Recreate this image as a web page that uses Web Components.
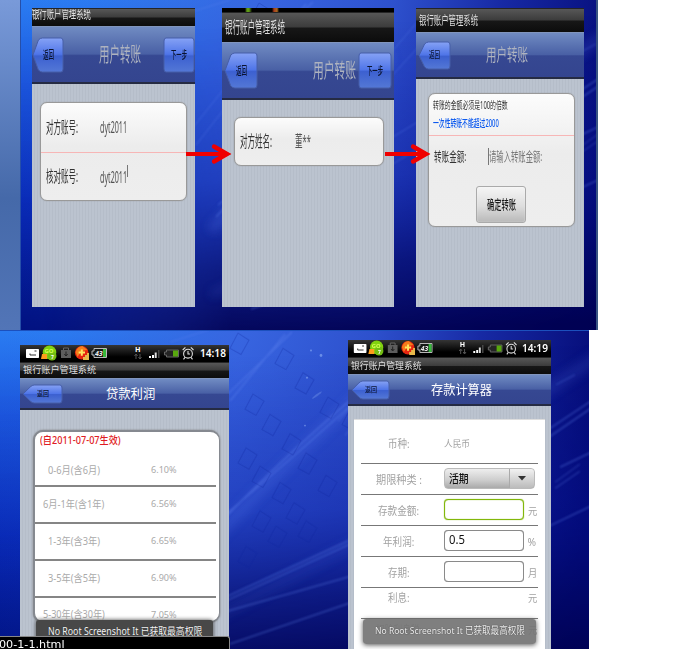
<!DOCTYPE html>
<html lang="zh">
<head>
<meta charset="utf-8">
<title>银行账户管理系统</title>
<style>
body{margin:0;background:#fff;font-family:"Noto Sans","Noto Sans CJK SC",sans-serif;width:698px;height:649px;overflow:hidden}
</style>
</head>
<body>
<slide-deck></slide-deck>
<script>
const define=(name,html,init)=>customElements.define(name,class extends HTMLElement{
  connectedCallback(){
    if(this.shadowRoot)return;
    const t=document.createElement('template');
    t.innerHTML=typeof html==='function'?html(this):html;
    this.attachShadow({mode:'open'}).append(t.content.cloneNode(true));
    if(init)init(this,this.shadowRoot);
  }
});

/* Text condensed or expanded horizontally to an exact width */
define('fit-text',`<style>:host{display:block;flex:none;white-space:nowrap;line-height:1.2}
span{display:inline-block;transform-origin:0 50%;vertical-align:top}</style><span><slot></slot></span>`,(el,root)=>{
  const w=+el.getAttribute('w'),s=root.querySelector('span');
  el.style.fontSize=el.getAttribute('size')+'px';
  el.style.width=w+'px';
  s.style.transform=`scaleX(${w/s.offsetWidth})`;
});

define('deck-backdrop',el=>{
  const top=el.getAttribute('kind')==='top';
  const diamonds=[[40,15],[85,30],[105,54],[55,75],[72,95],[130,78],[152,90],[92,114],[48,128],[62,146],[108,133],[128,155],[82,162],[96,182],[62,190],[78,205],[108,200],[48,225]]
   .map(([x,y])=>`<path d="M${x+198} ${y-12}l11 7-8 14-11-6z"/>`).join('');
  return `<style>:host{display:block;overflow:hidden}svg{display:block;width:100%;height:100%}</style>
<svg viewBox="0 0 ${top?575:589} ${top?330:319}" preserveAspectRatio="none">
<defs><linearGradient id="v" x1="0" y1="0" x2="0" y2="1"><stop offset="0" stop-color="#2a7cf2"/><stop offset=".25" stop-color="#1c57de"/><stop offset=".6" stop-color="#0a2fbe"/><stop offset="1" stop-color="#001690"/></linearGradient>
<linearGradient id="h" x1="0" y1="0" x2="1" y2=".05"><stop offset="0" stop-color="#3d63d8" stop-opacity="0"/><stop offset=".1" stop-color="#3d63d8" stop-opacity=".05"/><stop offset=".4" stop-color="#3b60dc" stop-opacity=".8"/><stop offset=".62" stop-color="#2e4bc8" stop-opacity=".88"/><stop offset=".8" stop-color="#1625a0" stop-opacity=".95"/><stop offset="1" stop-color="#050c78"/></linearGradient>
<linearGradient id="b" x1="0" y1="0" x2=".06" y2="1"><stop offset=".1" stop-color="#000c8a" stop-opacity="0"/><stop offset=".55" stop-color="#000c8a" stop-opacity=".3"/><stop offset=".8" stop-color="#000564" stop-opacity=".7"/><stop offset="1" stop-color="#000050" stop-opacity=".92"/></linearGradient>
<linearGradient id="lm" x1="0" x2="1"><stop offset=".03" stop-color="#fff" stop-opacity=".35"/><stop offset=".35" stop-color="#fff"/></linearGradient><mask id="m"><rect width="600" height="340" fill="url(#lm)"/></mask>
<filter id="f" x="-20%" y="-20%" width="140%" height="140%"><feGaussianBlur stdDeviation="5"/></filter>
<filter id="s"><feGaussianBlur stdDeviation=".8"/></filter></defs>
<rect width="600" height="340" fill="url(#v)"/><rect width="600" height="340" fill="url(#h)"/><rect width="600" height="340" fill="url(#b)" mask="url(#m)"/>
<g filter="url(#f)" fill="none" stroke="#5377eb"><path d="M190 230Q270 145 370 55" stroke-width="9" opacity=".3"/><path d="M190 295L365 205" stroke-width="8" opacity=".16"/><path d="M500 90L600 25" stroke-width="10" opacity=".2"/></g>
<g filter="url(#s)" fill="none" stroke="#6b8df5" opacity=".36"><path d="M195 217Q260 145 355 65M228 63L292 2M230 70L285 4M197 205Q265 150 350 75" stroke-width="1.5"/><path d="M210 270L365 200M212 273L365 204M205 283L360 240M230 309L355 267M545 100L594 68M545 108L594 75M545 195L594 172M560 135L594 119" stroke-width="1.5"/><path d="M170 12L209 0M170 130L214 75M175 145L218 90M338 90L398 20M345 104L402 42M350 150L400 120M350 177L400 147M556 54L575 44M555 150L580 132M555 156L580 139"/></g>
<g fill="none" stroke="#142aa0" opacity=".28">${diamonds}</g>
<g fill="#a8c8ff" opacity=".5"><circle cx="311" cy="20" r="1"/><circle cx="321" cy="25" r="1.4"/><circle cx="307" cy="47" r="1"/><circle cx="305" cy="94" r=".9"/><ellipse cx="317" cy="64" rx="6" ry="1" transform="rotate(-35 317 64)" opacity=".5"/></g>
${top?'':'<path d="M0 .5H589" stroke="#1c50bd"/>'}
</svg>`});

define('flow-arrow',`<style>:host{display:block;position:absolute;width:47px;height:22px}svg{display:block}</style>
<svg width="47" height="22" viewBox="0 0 47 22"><path d="M0 11H40" stroke="#f00000" stroke-width="4"/><path d="M28 3.5L41 11L28 18.5" fill="none" stroke="#f00000" stroke-width="4.4" stroke-linecap="round"/><path d="M36 6.5L45 11L36 15.5z" fill="#f00000"/></svg>`);

define('phone-screen',el=>`<style>:host{display:flex;flex-direction:column;flex:none;overflow:hidden;position:relative;width:${el.getAttribute('w')}px;height:${el.getAttribute('h')}px;
background:repeating-linear-gradient(90deg,#bbc3cf 0 2px,#b5bdc9 2px 3px)}</style><slot></slot>`);

define('status-icons',`<style>:host{display:block;flex:none;height:17px;background:linear-gradient(#353535,#000 70%)}svg{display:block;width:100%;height:17px;overflow:hidden}text{font-family:"Noto Sans",sans-serif}</style>
<svg viewBox="0 0 209 17" preserveAspectRatio="none">
<rect x="6" y="4" width="13" height="9" rx=".8" fill="#fff"/><path d="M10 8.5v1.5h6M14.5 6h2" stroke="#333" fill="none"/>
<circle cx="29.5" cy="7.4" r="6.8" fill="#81d20e"/><circle cx="32" cy="11" r="4.5" fill="#72bd13"/><path d="M22 9h5v5h-6z" fill="#ff9d1c"/><text x="24.5" y="7.8" font-size="6" font-weight="700" fill="#d4ff56">GO</text><text x="31" y="14.2" font-size="5" font-weight="700" fill="#fff">7</text>
<path d="M43.5 5V3h5v2" fill="none" stroke="#666"/><rect x="41" y="5" width="10" height="8" fill="#5d5d5d"/><path d="M46 6.5v4M44.3 9l1.7 2 1.7-2" stroke="#222" fill="none"/>
<circle cx="61.7" cy="7.7" r="6.8" fill="#e72410"/><path d="M55.5 7q2-6 7-6l5 4-6 1-4 6z" fill="#ffac20" opacity=".65"/><path d="M61.8 4.4v6.4M58.6 7.5h6.4" stroke="#ffe65f" stroke-width="2"/><path d="M63 15v-3h2v-2h2V8h2v7z" fill="#e8b84b"/>
<path d="M72 6h2V3.5h12.5v9H74V10h-2z" fill="#161916" stroke="#bababa"/><path d="M83 4h3v8h-3z" fill="#36b83a"/><text x="75" y="10.8" font-size="7" font-style="italic" font-weight="700" fill="#eee">43</text>
<text x="115" y="6.8" font-size="7.2" font-weight="700" fill="#fff">H</text><path d="M116 14V9m-1.5 2L116 9l1.5 2M120 9v5m-1.5-2l1.5 2 1.5-2" stroke="#555" fill="none"/>
<path d="M129 13v-2h2v2zM132 13v-3h2v3z" fill="#fff"/><path d="M134.7 13V7.5h2V13z" fill="#ddd"/><path d="M138 13V5h1.5v8z" fill="#484848"/>
<path d="M144.5 7h2V5h12v7h-12v-2h-2z" fill="#252525" stroke="#666"/><path d="M153 5.5h5v6h-5z" fill="#58a80e"/>
<g fill="none" stroke="#ddd" stroke-width="1.1"><circle cx="168" cy="8.7" r="4.4"/><path d="M168 6v3h2M162.7 5l2.7-2.6M170.8 2.4l2.7 2.6M165 12.4l-1.5 2M171 12.4l1.5 2"/></g>
</svg>`);
define('status-bar',el=>`<style>:host{display:grid;flex:none;height:17px}status-icons,.t{grid-area:1/1}.t{justify-self:end;align-self:center;margin-right:${el.getAttribute('end')}px;color:#fff;font-weight:600}</style><status-icons></status-icons><fit-text class="t" w="26" size="10.5"><slot></slot></fit-text>`);

define('title-bar',el=>`<style>:host{display:flex;flex:none;align-items:center;overflow:hidden;box-sizing:border-box;height:${el.getAttribute('h')}px;padding-left:3px;color:#dedede;border-top:1px solid #252525;background:linear-gradient(#575757,#3c3c3c 48%,#171717 52%,#0c0c0c)}</style><slot></slot>`);

define('nav-bar',el=>`<style>:host{display:grid;grid-template-columns:${el.getAttribute('cols')};flex:none;align-items:center;box-sizing:border-box;height:${el.getAttribute('h')}px;border-top:1px solid #8195bd;border-bottom:2px solid #252b43;background:linear-gradient(#708bc2,#4960a5 49%,#364892 52%,#34458f)}
::slotted(fit-text){grid-column:3}</style><slot></slot>`);

define('nav-button',el=>{
 const w=+el.getAttribute('w'),h=+el.getAttribute('h'),back=el.hasAttribute('back'),n=w*.2;
 const p=back?`M1 ${h/2}L${n} 3Q${n+2} 1 ${n+4} 1H${w-3}Q${w-1} 1 ${w-1} 4V${h-4}Q${w-1} ${h-1} ${w-3} ${h-1}H${n+4}Q${n+2} ${h-1} ${n} ${h-3}Z`:`M3 1H${w-3}Q${w-1} 1 ${w-1} 4V${h-4}Q${w-1} ${h-1} ${w-3} ${h-1}H3Q1 ${h-1} 1 ${h-4}V4Q1 1 3 1Z`;
 return `<style>:host{display:grid;place-items:center;width:${w}px;height:${h}px;grid-column:${back?2:4};color:#0a1330;font-weight:500}svg,slot{grid-area:1/1}slot{display:block;${back?`padding-left:${el.getAttribute('pad')||1}px`:''}}</style><svg width="${w}" height="${h}"><defs><linearGradient id="g" x2="0" y2="1"><stop stop-color="#86a2f5"/><stop offset=".48" stop-color="#4f75e8"/><stop offset=".53" stop-color="#3c60d0"/><stop offset="1" stop-color="#5478d6"/></linearGradient></defs><path d="${p}" fill="url(#g)" stroke="#465ea8"/></svg><slot></slot>`});

define('form-card',el=>`<style>:host{display:flex;flex-direction:column;flex:none;box-sizing:border-box;border:1.5px solid #999;border-radius:7px;background:linear-gradient(#fcfcfc,#ececec 45%,#eee);color:#333;box-shadow:0 0 1px #888}</style><slot></slot>`);
define('form-row',`<style>:host{display:flex;flex:none;align-items:center;box-sizing:border-box}:host([line]){border-bottom:1.5px solid #f7b6b6}</style><slot></slot>`);
define('text-caret',`<style>:host{display:block;width:1px;height:17px;background:#777;flex:none}</style>`);
define('push-button',`<style>:host{display:grid;place-items:center;box-sizing:border-box;width:50px;height:37px;border:1px solid #aaa;border-radius:3px;background:linear-gradient(#f5f5f5,#ddd 55%,#b9b9b9);color:#181818;font-weight:500;box-shadow:inset 0 0 1px #fff}</style><slot></slot>`);

define('rate-card',`<style>:host{display:flex;flex-direction:column;box-sizing:border-box;width:187px;height:193px;margin:20px 0 0 13px;border:2px solid #858990;border-right-width:1.5px;border-radius:10px;background:#fff;overflow:hidden;box-shadow:0 0 2px #777}</style><slot></slot>`);
define('rate-row',el=>`<style>:host{display:grid;grid-template-columns:77px 1fr;flex:none;box-sizing:border-box;align-items:center;height:37px;width:181px;border-bottom:2px solid #858585;color:#aaa}:host([last]){border:0;height:34px}.a{justify-self:center}.b{margin-left:39px}</style><fit-text class="a" w="${el.getAttribute('w')}" size="10.3"><slot></slot></fit-text><fit-text class="b" w="26" size="9.8">${el.getAttribute('rate')}</fit-text>`);

define('calc-row',el=>`<style>:host{display:grid;grid-template-columns:75px 8px 80px 3.5px 1fr;flex:none;align-items:center;box-sizing:border-box;height:${el.getAttribute('h')||31}px;margin:0 7px;border-bottom:1.5px solid #777;color:#a2a2a2}.l{justify-self:center;padding-top:${el.getAttribute('drop')||0}px}.u{grid-column:5;padding-top:${el.getAttribute('drop')||0}px}::slotted(*){grid-column:3}</style><fit-text class="l" w="${el.getAttribute('w')}" size="10.8">${el.getAttribute('label')}</fit-text><slot></slot>${el.hasAttribute('unit')?`<fit-text class="u" w="9" size="10.3">${el.getAttribute('unit')}</fit-text>`:''}`);
define('input-box',`<style>:host{display:flex;box-sizing:border-box;width:80px;height:20.5px;border:1px solid #8a8a8a;border-radius:4px;background:#fff;color:#111;padding-left:4px;align-items:center;box-shadow:0 0 .5px #777}:host([focus]){border-color:#82b70b;box-shadow:0 0 1px #82b70b,inset 0 0 1px #82b70b}</style><slot></slot>`);
define('select-box',`<style>:host{display:flex;align-items:stretch;box-sizing:border-box;width:91px;height:21px;border:1px solid #bbb;border-radius:4px;background:linear-gradient(#eee,#ccc 60%,#aaa);color:#111}.t{flex:1;padding:4px 0 0 4px;font-weight:500}.a{width:24px;border-left:1px solid #aaa;display:grid;place-items:center;background:linear-gradient(#f2f2f2,#bbb);border-radius:0 4px 4px 0}</style><div class="t"><slot></slot></div><div class="a"><svg width="8" height="5"><path d="M0 0h8L4 4.5z" fill="#333"/></svg></div>`);
define('toast-note',`<style>:host{display:flex;position:absolute;box-sizing:border-box;justify-content:center;color:#f4f4f4;border-radius:3px;text-shadow:0 0 1px #222}</style><slot></slot>`);
define('link-status',`<style>:host{position:absolute;left:0;top:636px;width:230px;height:13px;box-sizing:border-box;background:#000;border:1px solid #888;border-left:0;border-bottom:0;border-radius:0 3px 0 0;color:#fff;font-family:"DejaVu Sans",sans-serif;overflow:hidden}</style><slot></slot>`);

define('slide-deck',`<style>:host{display:block;position:relative;width:698px;height:649px;overflow:hidden}
.s1,.s2{display:grid;overflow:hidden}.s1{width:598px;height:330px;grid-template-columns:21px 575px 2px}
.strip{background:linear-gradient(#799ad9,#4569a9 60%,#5275b7);border-right:1px solid #264fa8;box-sizing:border-box}.edge{background:#395482}
.s2{width:589px;height:319px}.s1>.row{grid-area:1/1/2/4;z-index:1}.s1>.strip{grid-area:1/1}.s1>deck-backdrop{grid-area:1/2}.s1>.edge{grid-area:1/3}
.s2>*{grid-area:1/1}.row{display:flex;position:relative;align-items:flex-start}.s1 .row{padding:8px 0 0 32px}.s2 .row{padding:10px 0 0 20px;gap:119px}</style>
<div class="s1"><div class="strip"></div><deck-backdrop kind="top"></deck-backdrop><div class="edge"></div>
<div class="row">
<phone-screen w="163" h="299">
 <title-bar h="18" style="padding-left:0"><fit-text w="59" size="14" style="margin-top:-8px">银行账户管理系统</fit-text></title-bar>
 <nav-bar h="58" cols="0 67px 64px 32px"><nav-button back w="32" h="36" pad="1"><fit-text w="11" size="11">返回</fit-text></nav-button><fit-text w="42" size="20.5" style="color:#aeb3bf">用户转账</fit-text><nav-button w="32" h="36"><fit-text w="16" size="11">下一步</fit-text></nav-button></nav-bar>
 <form-card style="margin:18px 8px 0 8px;height:99px"><form-row line style="height:49.5px;padding-left:5px"><fit-text w="32" size="16">对方账号:</fit-text><fit-text w="27" size="17" style="margin-left:22px;color:#505050">dyt2011</fit-text></form-row><form-row style="height:49px;padding-left:5px"><fit-text w="32" size="16">核对账号:</fit-text><fit-text w="27" size="17" style="margin-left:22px;color:#505050">dyt2011</fit-text><text-caret style="height:12px;margin-top:-12px"></text-caret></form-row></form-card>
</phone-screen>
<phone-screen w="172" h="299" style="margin-left:27px">
 <div style="height:4px;flex:none;background:linear-gradient(90deg,#000 23px,#5f9b16 25px,#5f9b16 27px,#000 30px 50px,#a8381a 52px,#a86a20 55px,#000 57px)"></div>
 <title-bar h="30"><fit-text w="60" size="15.5" style="margin-top:-1px">银行账户管理系统</fit-text></title-bar>
 <nav-bar h="58" cols="2px 89px 45px 34px"><nav-button back w="34" h="37" pad="0"><fit-text w="11" size="11">返回</fit-text></nav-button><fit-text w="43" size="20.5" style="color:#aeb3bf">用户转账</fit-text><nav-button w="34" h="37"><fit-text w="16" size="11">下一步</fit-text></nav-button></nav-bar>
 <form-card style="margin:17px 10px 0 11.5px;height:49px"><form-row style="height:48px;padding-left:5px"><fit-text w="32" size="16">对方姓名:</fit-text><fit-text w="16" size="16" style="margin-left:23px;color:#505050">董**</fit-text></form-row></form-card>
</phone-screen>
<phone-screen w="168" h="299" style="margin-left:22px">
 <title-bar h="24"><fit-text w="59" size="12.5">银行账户管理系统</fit-text></title-bar>
 <nav-bar h="47" cols="2px 68px 45px 34px"><nav-button back w="33" h="29" pad="0"><fit-text w="11" size="9">返回</fit-text></nav-button><fit-text w="42" size="17" style="color:#aeb3bf">用户转账</fit-text></nav-bar>
 <form-card style="margin:14px 9px 0 12px;height:134px"><form-row style="height:22px;padding-left:4px"><fit-text w="75" size="10.5">转账的金额必须是100的倍数</fit-text></form-row><form-row line style="height:20px;padding:0 0 5px 4px;color:#0b59ef;font-weight:500"><fit-text w="66" size="10.5">一次性转账不能超过2000</fit-text></form-row><form-row style="height:41px;padding-left:5px"><fit-text w="32" size="13">转账金额:</fit-text><text-caret style="margin-left:22px"></text-caret><fit-text w="53" size="13" style="color:#777">请输入转账金额:</fit-text></form-row><form-row style="height:37px;margin-top:9px;padding-left:47px"><push-button><fit-text w="29" size="13">确定转账</fit-text></push-button></form-row></form-card>
</phone-screen>
<flow-arrow style="left:186px;top:143px"></flow-arrow><flow-arrow style="left:385px;top:143px"></flow-arrow>
</div></div>
<div class="s2"><deck-backdrop></deck-backdrop><div class="row">
<phone-screen w="209" h="309" style="margin-top:5px">
 <status-bar end="3">14:18</status-bar><title-bar h="16"><fit-text w="73" size="9.4" style="margin-top:-1px">银行账户管理系统</fit-text></title-bar>
 <nav-bar h="32" cols="2px 84px 60px"><nav-button back w="41" h="20" pad="0"><fit-text w="12" size="6.5">返回</fit-text></nav-button><fit-text w="49" size="12.8" style="color:#fff">贷款利润</fit-text></nav-bar>
 <rate-card><fit-text w="81" size="9.8" style="color:#df1b23;margin:3px 0 0 5px;font-weight:500;height:12px">(自2011-07-07生效)</fit-text><div style="height:3px;flex:none"></div><rate-row w="52" rate="6.10%" style="height:36.5px;padding-top:5px">0-6月(含6月)</rate-row><rate-row w="61" rate="6.56%">6月-1年(含1年)</rate-row><rate-row w="52" rate="6.65%">1-3年(含3年)</rate-row><rate-row w="52" rate="6.90%">3-5年(含5年)</rate-row><rate-row last w="62" rate="7.05%">5-30年(含30年)</rate-row></rate-card>
 <toast-note style="left:16px;top:275px;width:177px;height:30px;padding-top:5px;background:#484848;box-shadow:0 0 4px #444"><fit-text w="154" size="10">No Root Screenshot It 已获取最高权限</fit-text></toast-note>
</phone-screen>
<phone-screen w="203" h="309">
 <status-bar end="3">14:19</status-bar><title-bar h="17"><fit-text w="71" size="9.2" style="margin-top:-1px">银行账户管理系统</fit-text></title-bar>
 <nav-bar h="32" cols="3px 80px 61px"><nav-button back w="39" h="20" pad="0"><fit-text w="12" size="6.5">返回</fit-text></nav-button><fit-text w="61" size="12.8" style="color:#fff">存款计算器</fit-text></nav-bar>
 <div style="margin:13px 6px 0 6px;background:#fff;flex:1;border-top:1px solid #ddd;box-sizing:border-box;display:flex;flex-direction:column"><div style="height:5px;flex:none"></div>
 <calc-row h="39" w="22" label="币种:"><fit-text w="26" size="9">人民币</fit-text></calc-row>
 <calc-row h="30.5" w="46" label="期限种类 :" drop="3"><select-box><fit-text w="20" size="10.8">活期</fit-text></select-box></calc-row>
 <calc-row w="41" label="存款金额:" unit="元" drop="4"><input-box focus></input-box></calc-row>
 <calc-row w="31" label="年利润:" unit="%" drop="4"><input-box><fit-text w="16" size="12">0.5</fit-text></input-box></calc-row>
 <calc-row w="22" label="存期:" unit="月" drop="4"><input-box></input-box></calc-row>
 <calc-row w="22" label="利息:" unit="元" style="padding-bottom:8px"></calc-row>
 <calc-row w="46" label="扣除利息税:" unit="元" style="padding-bottom:7px"></calc-row></div>
 <toast-note style="left:15px;top:279px;width:173px;height:25px;padding-top:6px;background:rgba(116,116,116,.92);box-shadow:0 1px 5px #555"><fit-text w="150" size="9.8">No Root Screenshot It 已获取最高权限</fit-text></toast-note>
</phone-screen>
</div></div>
<link-status><fit-text w="66" size="10.5" style="margin-left:-1px;margin-top:1px">00-1-1.html</fit-text></link-status>`);
</script>
</body>
</html>
